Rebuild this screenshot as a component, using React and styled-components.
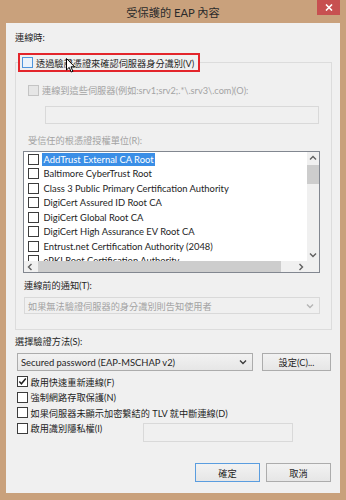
import React from 'react'
import styled, { createGlobalStyle } from 'styled-components'

const GlobalStyle = createGlobalStyle`
  html, body {
    margin: 0;
    padding: 0;
  }
  body {
    width: 346px;
    height: 500px;
    overflow: hidden;
    background: #c9a17c;
    font-family: Lato, "Noto Sans CJK TC", sans-serif;
    font-size: 9.2px;
    color: #1e1e1e;
  }
`

const Window = styled.div`
  width: 346px;
  height: 500px;
  box-sizing: border-box;
  padding: 0 6px 7px;
  background: #c9a17c;
  display: flex;
  flex-direction: column;
`

const TitleBar = styled.div`
  height: 23px;
  flex: none;
  display: grid;
  grid-template-columns: 1fr auto 1fr;
  align-items: start;
`

const Title = styled.div`
  grid-column: 2;
  padding-top: 6px;
  line-height: 14px;
  font-size: 11.2px;
  color: #2b2b2b;
  white-space: nowrap;
`

const CloseButton = styled.div`
  grid-column: 3;
  justify-self: end;
  width: 23px;
  height: 15px;
  background: #c75050;
  display: flex;
  align-items: center;
  justify-content: center;
`

const Client = styled.div`
  flex: 1;
  position: relative;
  box-sizing: border-box;
  padding: 9px 9px 11px;
  background: #f0f0f0;
  display: flex;
  flex-direction: column;
`

const Label = styled.div`
  height: 12px;
  line-height: 12px;
  white-space: nowrap;
  color: ${p => (p.$disabled ? '#a3a3a3' : '#1e1e1e')};
  margin: ${p => p.$margin || '0'};
`

const Group = styled.fieldset`
  margin: 9px -1px 0 0;
  padding: 0 0 15px;
  border: 1px solid #dcdcdc;
  min-width: 0;
`

const Legend = styled.legend`
  margin-left: 2px;
  padding: 0 4px 0 2px;
  height: 19px;
  box-sizing: border-box;
  border: 2px solid #e3252b;
  display: flex;
  align-items: center;
  gap: 3px;
  white-space: nowrap;
`

const Box = styled.span`
  flex: none;
  box-sizing: border-box;
  width: 11px;
  height: 11px;
  border: 1px solid ${p => (p.$disabled ? '#c4c4c4' : p.$hover ? '#4f95dc' : '#3c3c3c')};
  background: ${p => (p.$disabled ? '#e6e6e6' : p.$hover ? '#eaf3fc' : '#fff')};
  display: inline-flex;
  align-items: center;
  justify-content: center;
`

const CheckRow = styled.div`
  display: flex;
  align-items: center;
  gap: ${p => p.$gap || '2.5px'};
  height: ${p => p.$height || '15.5px'};
  margin: ${p => p.$margin || '0 0 0 2px'};
  white-space: nowrap;
  color: ${p => (p.$disabled ? '#a3a3a3' : '#1e1e1e')};
`

const TextField = styled.div`
  box-sizing: border-box;
  height: ${p => p.$height || '18px'};
  margin: ${p => p.$margin || '0'};
  border: 1px solid #d9d9d9;
  background: #f0f0f0;
`

const ListBox = styled.div`
  margin: 4px 11px 0 7px;
  height: 122px;
  box-sizing: border-box;
  border: 1px solid #828790;
  background: #fff;
  display: grid;
  grid-template-columns: 1fr 12px;
  grid-template-rows: 1fr 11px;
  overflow: hidden;
`

const Items = styled.div`
  overflow: hidden;
  min-width: 0;
`

const Item = styled.div`
  height: 14.5px;
  display: flex;
  align-items: center;
  padding-left: 4px;
`

const ItemText = styled.span`
  margin-left: 3px;
  padding: 0 1.5px;
  height: 13px;
  line-height: 13px;
  white-space: nowrap;
  font-size: 9.4px;
  background: ${p => (p.$selected ? '#3a8ee6' : 'transparent')};
  color: ${p => (p.$selected ? '#fff' : '#1e1e1e')};
`

const VScroll = styled.div`
  background: #f0f0f0;
  display: flex;
  flex-direction: column;
`

const HScroll = styled.div`
  background: #f0f0f0;
  display: flex;
  align-items: stretch;
`

const Arrow = styled.div`
  flex: none;
  width: ${p => (p.$horizontal ? '12px' : 'auto')};
  height: ${p => (p.$horizontal ? 'auto' : '12px')};
  display: flex;
  align-items: center;
  justify-content: center;
`

const Thumb = styled.div`
  background: #cdcdcd;
  flex: none;
  width: ${p => p.$width || 'auto'};
  height: ${p => p.$height || 'auto'};
  margin: ${p => p.$margin || '0'};
`

const Spacer = styled.div`
  flex: 1;
`

const Corner = styled.div`
  background: #f0f0f0;
`

const Combo = styled.div`
  box-sizing: border-box;
  height: ${p => p.$height || '17px'};
  margin: ${p => p.$margin || '0'};
  flex: ${p => p.$flex || 'none'};
  border: 1px solid ${p => (p.$disabled ? '#d9d9d9' : '#acacac')};
  background: ${p => (p.$disabled ? '#f0f0f0' : 'linear-gradient(#f2f2f2, #e6e6e6)')};
  color: ${p => (p.$disabled ? '#a3a3a3' : '#1e1e1e')};
  display: flex;
  align-items: center;
  justify-content: space-between;
  padding: 0 5px 0 3px;
  white-space: nowrap;
`

const ComboText = styled.span`
  font-size: ${p => p.$size || 'inherit'};
`

const MethodRow = styled.div`
  display: flex;
  align-items: center;
  gap: 9px;
  margin: 5px 0 3px 2px;
`

const Button = styled.div`
  box-sizing: border-box;
  width: ${p => p.$width || '65px'};
  height: ${p => p.$height || '19px'};
  border: 1px solid ${p => (p.$default ? '#5a9ddf' : '#acacac')};
  background: linear-gradient(#f2f2f2, #e6e6e6);
  display: flex;
  align-items: center;
  justify-content: center;
  white-space: nowrap;
  color: #1e1e1e;
`

const PrivacyRow = styled.div`
  display: grid;
  grid-template-columns: 126px 150px;
  align-items: start;
  margin-left: 2px;
`

const ButtonBar = styled.div`
  margin-top: auto;
  display: flex;
  justify-content: flex-end;
  gap: 6px;
`

const Cursor = styled.svg`
  position: absolute;
  left: 60px;
  top: 35px;
`

const Chevron = ({ dir = 'down', color = '#5a5a5a' }) => {
  const d = {
    down: 'M1 1.5 L4 4.5 L7 1.5',
    up: 'M1 4.5 L4 1.5 L7 4.5',
    left: 'M4.5 1 L1.5 4 L4.5 7',
    right: 'M1.5 1 L4.5 4 L1.5 7'
  }[dir]
  const vertical = dir === 'up' || dir === 'down'
  return (
    <svg width={vertical ? 8 : 6} height={vertical ? 6 : 8} viewBox={vertical ? '0 0 8 6' : '0 0 6 8'}>
      <path d={d} fill='none' stroke={color} strokeWidth='1.4' />
    </svg>
  )
}

const Check = ({ checked, disabled, hover }) => (
  <Box $disabled={disabled} $hover={hover}>
    {checked && (
      <svg width='9' height='9' viewBox='0 0 9 9'>
        <path d='M1.3 4.6 L3.4 6.8 L7.8 1.6' fill='none' stroke='#1e1e1e' strokeWidth='1.5' />
      </svg>
    )}
  </Box>
)

const roots = [
  'AddTrust External CA Root',
  'Baltimore CyberTrust Root',
  'Class 3 Public Primary Certification Authority',
  'DigiCert Assured ID Root CA',
  'DigiCert Global Root CA',
  'DigiCert High Assurance EV Root CA',
  'Entrust.net Certification Authority (2048)',
  'ePKI Root Certification Authority'
]

const options = [
  { label: '啟用快速重新連線(F)', checked: true },
  { label: '強制網路存取保護(N)' },
  { label: '如果伺服器未顯示加密繫結的 TLV 就中斷連線(D)' }
]

export default function App () {
  return (
    <>
      <GlobalStyle />
      <Window>
        <TitleBar>
          <Title>受保護的 EAP 內容</Title>
          <CloseButton>
            <svg width='8' height='7' viewBox='0 0 8 7'>
              <path d='M1 0.5 L7 6.5 M7 0.5 L1 6.5' stroke='#fff' strokeWidth='1.6' />
            </svg>
          </CloseButton>
        </TitleBar>
        <Client>
          <Label>連線時:</Label>
          <Group>
            <Legend>
              <Check hover />
              <span>透過驗證憑證來確認伺服器身分識別(V)</span>
            </Legend>
            <CheckRow $disabled $height='12px' $margin='12px 0 0 12px' $gap='3px'>
              <Check disabled />
              <span>連線到這些伺服器(例如:srv1;srv2;.*\.srv3\.com)(O):</span>
            </CheckRow>
            <TextField $margin='10px 12px 0 29px' />
            <Label $disabled $margin='11px 0 0 12px'>受信任的根憑證授權單位(R):</Label>
            <ListBox>
              <Items>
                {roots.map((name, i) => (
                  <Item key={name}>
                    <Check />
                    <ItemText $selected={i === 0}>{name}</ItemText>
                  </Item>
                ))}
              </Items>
              <VScroll>
                <Arrow><Chevron dir='up' color='#606060' /></Arrow>
                <Thumb $height='19px' $margin='1px 0 0 0' />
                <Spacer />
                <Arrow><Chevron dir='down' color='#606060' /></Arrow>
              </VScroll>
              <HScroll>
                <Arrow $horizontal><Chevron dir='left' color='#606060' /></Arrow>
                <Thumb $width='243px' $margin='0 0 0 2px' />
                <Spacer />
                <Arrow $horizontal><Chevron dir='right' color='#606060' /></Arrow>
              </HScroll>
              <Corner />
            </ListBox>
            <Label $margin='7px 0 0 8px'>連線前的通知(T):</Label>
            <Combo $disabled $margin='5px 11px 0 8px'>
              <ComboText>如果無法驗證伺服器的身分識別則告知使用者</ComboText>
              <Chevron color='#b5b5b5' />
            </Combo>
          </Group>
          <Label $margin='6px 0 0 0'>選擇驗證方法(S):</Label>
          <MethodRow>
            <Combo $flex='1' $height='18px'>
              <ComboText $size='9.4px'>Secured password (EAP-MSCHAP v2)</ComboText>
              <Chevron color='#3c3c3c' />
            </Combo>
            <Button $width='69px' $height='18px'>設定(C)...</Button>
          </MethodRow>
          {options.map(o => (
            <CheckRow key={o.label}>
              <Check checked={o.checked} />
              <span>{o.label}</span>
            </CheckRow>
          ))}
          <PrivacyRow>
            <CheckRow $margin='0'>
              <Check />
              <span>啟用識別隱私權(I)</span>
            </CheckRow>
            <TextField $height='19px' $margin='2.5px 0 0 0' />
          </PrivacyRow>
          <ButtonBar>
            <Button $default>確定</Button>
            <Button>取消</Button>
          </ButtonBar>
          <Cursor width='10' height='16' viewBox='0 0 10 16'>
            <path d='M0.5 0.5 L0.5 12 L3.2 9.4 L5.2 14 L6.9 13.3 L5 8.8 L8.6 8.8 Z' fill='#fff' stroke='#000' strokeWidth='1' strokeLinejoin='round' />
          </Cursor>
        </Client>
      </Window>
    </>
  )
}
